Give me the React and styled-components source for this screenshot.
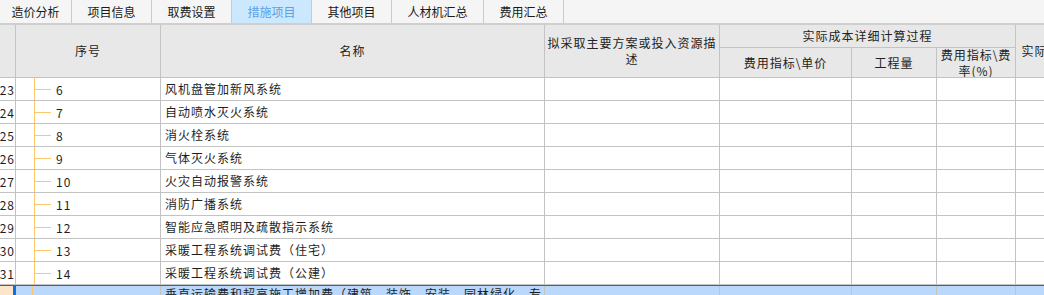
import React from 'react'
import styled, { createGlobalStyle, css } from 'styled-components'

const GlobalStyle = createGlobalStyle`
  html, body {
    margin: 0;
    padding: 0;
    background: #ffffff;
    overflow: hidden;
  }
  body {
    font-family: "Noto Sans CJK SC", "Noto Sans", sans-serif;
    font-size: 12px;
    color: #1e1e1e;
  }
`

const COLS = [16, 145, 384, 175, 132, 85, 79, 90]
const GRID_LINE = '#c3c3c3'

const Page = styled.div`
  width: 1044px;
  height: 295px;
  overflow: hidden;
`

const TabBar = styled.div`
  display: flex;
  height: 23px;
  background: #f5f5f5;
  border-bottom: 2px solid #cfcfcf;
`

const Tab = styled.div`
  width: ${({ w }) => w}px;
  flex: none;
  display: flex;
  align-items: center;
  justify-content: center;
  border-right: 1px solid #cacaca;
  font-size: 12px;
  color: #1a1a1a;
  box-sizing: border-box;

  ${({ active }) => active && css`
    background: #cce8ff;
    color: #5b9fe3;
  `}
`

const Header = styled.div`
  display: grid;
  grid-template-columns: ${COLS.map(c => c + 'px').join(' ')};
  grid-template-rows: 23px 30px;
  background: #e8e8e8;
  width: max-content;
  letter-spacing: 1px;
`

const HeadCell = styled.div`
  grid-column: ${({ col, span = 1 }) => `${col} / span ${span}`};
  grid-row: ${({ row, rows = 1 }) => `${row} / span ${rows}`};
  display: flex;
  align-items: center;
  justify-content: center;
  text-align: center;
  line-height: 16px;
  padding: 0 2px;
  border-right: 1px solid ${GRID_LINE};
  border-bottom: 1px solid ${GRID_LINE};
  box-sizing: border-box;
  overflow: hidden;
  color: #222;
`

const Row = styled.div`
  display: flex;
  height: ${({ tall }) => (tall ? 40 : 23)}px;
  width: max-content;
  letter-spacing: 1px;
  ${({ selected }) => selected && css`
    margin-top: -1px;
    border-top: 2px solid #0b6fe6;
    background: #b9d8fb;
  `}
`

const Cell = styled.div`
  width: ${({ w }) => w}px;
  flex: none;
  box-sizing: border-box;
  border-right: 1px solid ${GRID_LINE};
  border-bottom: 1px solid ${GRID_LINE};
  display: flex;
  align-items: center;
  overflow: hidden;
  white-space: nowrap;
  ${({ selected }) => selected && css`
    border-bottom: none;
  `}
`

const NumCell = styled(Cell)`
  justify-content: flex-end;
  padding-right: 0;
  background: ${({ selected }) => (selected ? '#fde5c9' : '#ffffff')};
  ${({ selected }) => selected && css`
    align-items: flex-end;
    border-right: 3px solid #0b6fe6;
  `}
`

const TreeCell = styled(Cell)`
  position: relative;
  padding-left: ${({ selected }) => (selected ? 38 : 40)}px;

  &::before {
    content: '';
    position: absolute;
    left: ${({ selected }) => (selected ? 16 : 18)}px;
    top: 0;
    bottom: 0;
    width: 1px;
    background: #fcc76f;
  }

  &::after {
    content: '';
    position: absolute;
    left: 19px;
    top: 50%;
    width: 16px;
    height: 1px;
    background: #fcc76f;
    display: ${({ leaf }) => (leaf ? 'block' : 'none')};
  }
`

const NameCell = styled(Cell)`
  padding-left: 4px;
  white-space: normal;
  line-height: 16px;
  ${({ selected }) => selected && css`
    align-items: flex-start;
    padding-top: 0;
  `}
`

const tabs = [
  { label: '造价分析', w: 72 },
  { label: '项目信息', w: 80 },
  { label: '取费设置', w: 80 },
  { label: '措施项目', w: 80, active: true },
  { label: '其他项目', w: 80 },
  { label: '人材机汇总', w: 92 },
  { label: '费用汇总', w: 80 },
]

const rows = [
  { no: 23, seq: '6', name: '风机盘管加新风系统' },
  { no: 24, seq: '7', name: '自动喷水灭火系统' },
  { no: 25, seq: '8', name: '消火栓系统' },
  { no: 26, seq: '9', name: '气体灭火系统' },
  { no: 27, seq: '10', name: '火灾自动报警系统' },
  { no: 28, seq: '11', name: '消防广播系统' },
  { no: 29, seq: '12', name: '智能应急照明及疏散指示系统' },
  { no: 30, seq: '13', name: '采暖工程系统调试费（住宅）' },
  { no: 31, seq: '14', name: '采暖工程系统调试费（公建）' },
]

const BodyRow = ({ no, seq, name, selected }) => (
  <Row selected={selected} tall={selected}>
    <NumCell w={COLS[0]} selected={selected}>{no}</NumCell>
    <TreeCell w={COLS[1]} selected={selected} leaf={!!seq}>{seq}</TreeCell>
    <NameCell w={COLS[2]} selected={selected}>{name}</NameCell>
    {COLS.slice(3).map((w, i) => (
      <Cell key={i} w={w} selected={selected} />
    ))}
  </Row>
)

const App = () => (
  <Page>
    <GlobalStyle />
    <TabBar>
      {tabs.map(t => (
        <Tab key={t.label} w={t.w} active={t.active}>{t.label}</Tab>
      ))}
    </TabBar>

    <Header>
      <HeadCell col={1} row={1} rows={2} />
      <HeadCell col={2} row={1} rows={2}>序号</HeadCell>
      <HeadCell col={3} row={1} rows={2}>名称</HeadCell>
      <HeadCell col={4} row={1} rows={2}>拟采取主要方案或投入资源描述</HeadCell>
      <HeadCell col={5} span={3} row={1}>实际成本详细计算过程</HeadCell>
      <HeadCell col={8} row={1} rows={2}>实际成本金额</HeadCell>
      <HeadCell col={5} row={2}>费用指标\单价</HeadCell>
      <HeadCell col={6} row={2}>工程量</HeadCell>
      <HeadCell col={7} row={2}>费用指标\费率(%)</HeadCell>
    </Header>

    {rows.map(r => (
      <BodyRow key={r.no} {...r} />
    ))}
    <BodyRow
      selected
      no={32}
      seq=""
      name="垂直运输费和超高施工增加费（建筑、装饰、安装、园林绿化、专业工程）"
    />
  </Page>
)

export default App
